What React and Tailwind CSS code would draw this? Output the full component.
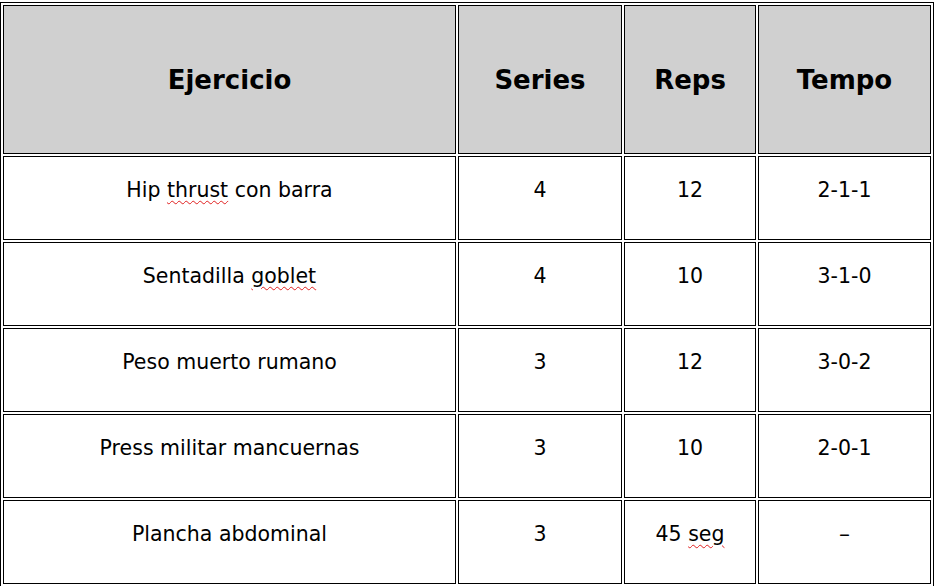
import React from "react";

const rows = [
  { name: "Hip thrust con barra", typo: "thrust", series: "4", reps: "12", tempo: "2-1-1" },
  { name: "Sentadilla goblet", typo: "goblet", series: "4", reps: "10", tempo: "3-1-0" },
  { name: "Peso muerto rumano", series: "3", reps: "12", tempo: "3-0-2" },
  { name: "Press militar mancuernas", series: "3", reps: "10", tempo: "2-0-1" },
  { name: "Plancha abdominal", series: "3", reps: "45 seg", repsTypo: "seg", tempo: "–" },
];

// texto con la palabra marcada por el corrector (subrayado rojo ondulado)
function Marked({ text, word }) {
  if (!word) return text;
  const i = text.indexOf(word);
  return (
    <>
      {text.slice(0, i)}
      <span className="underline decoration-wavy decoration-[#e02020] decoration-1 underline-offset-[3px]">
        {word}
      </span>
      {text.slice(i + word.length)}
    </>
  );
}

export default function App() {
  const th =
    "border border-black bg-[#d0d0d0] h-[149px] align-top pt-[59px] text-[26px] leading-[30px] font-bold text-center";
  const td =
    "border border-black h-[84px] align-top pt-[21px] text-[20.5px] leading-[24px] text-center";

  return (
    <main
      className="w-[934px] h-[586px] overflow-hidden bg-white pt-[2px] text-black"
      style={{ fontFamily: '"DejaVu Sans", sans-serif' }}
    >
      <table className="w-[934px] table-fixed border-separate border-spacing-[2px] border border-black">
        <thead>
          <tr>
            <th className={`${th} w-[453px]`}>Ejercicio</th>
            <th className={`${th} w-[164px]`}>Series</th>
            <th className={`${th} w-[132px]`}>Reps</th>
            <th className={`${th} w-[173px]`}>Tempo</th>
          </tr>
        </thead>
        <tbody>
          {rows.map((r) => (
            <tr key={r.name}>
              <td className={td}>
                <Marked text={r.name} word={r.typo} />
              </td>
              <td className={td}>{r.series}</td>
              <td className={td}>
                <Marked text={r.reps} word={r.repsTypo} />
              </td>
              <td className={td}>
                {r.tempo === "–" ? <span className="text-[22px]">–</span> : r.tempo}
              </td>
            </tr>
          ))}
        </tbody>
      </table>
    </main>
  );
}
